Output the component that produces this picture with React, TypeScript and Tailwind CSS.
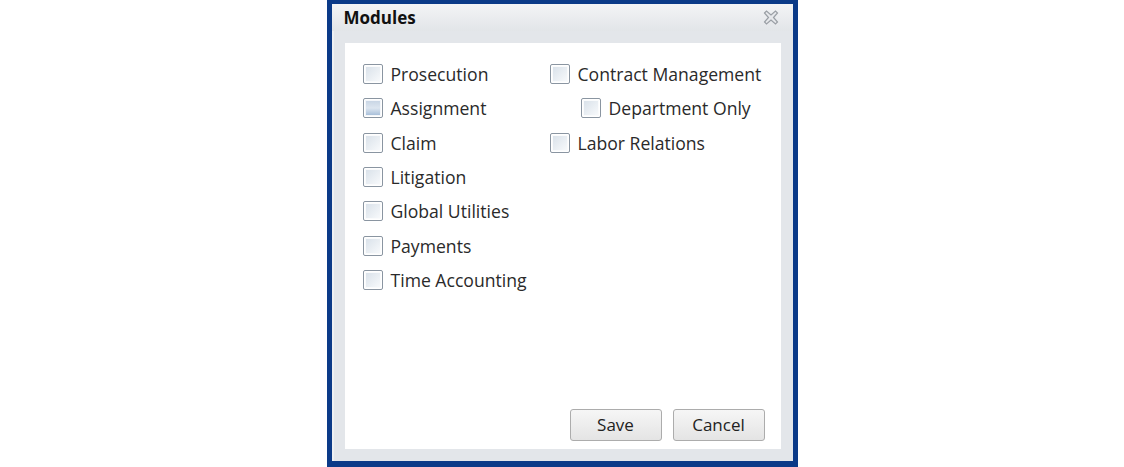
import React from "react";

type Item = { label: string; indent?: boolean; hover?: boolean };

const leftItems: Item[] = [
  { label: "Prosecution" },
  { label: "Assignment", hover: true },
  { label: "Claim" },
  { label: "Litigation" },
  { label: "Global Utilities" },
  { label: "Payments" },
  { label: "Time Accounting" },
];

const rightItems: Item[] = [
  { label: "Contract Management" },
  { label: "Department Only", indent: true },
  { label: "Labor Relations" },
];

const Box = ({ hover }: { hover?: boolean }) => (
  <span className="w-[20px] h-[20px] shrink-0 border border-[#8a95a1] rounded-[2px] p-px bg-white flex">
    <span
      className={
        hover
          ? "flex-1 border border-[#f3f6fa] bg-gradient-to-b from-[#c9d6e5] via-[#dde6f0] to-[#a9c0da]"
          : "flex-1 border border-[#fafbfc] bg-gradient-to-br from-[#dae2ea] to-[#f7f9fb]"
      }
    />
  </span>
);

const Row = ({ item }: { item: Item }) => (
  <label
    className={`h-[34.33px] flex items-center gap-[8px] ${item.indent ? "pl-[31px]" : ""}`}
  >
    <Box hover={item.hover} />
    <span className="text-[17.6px] text-[#2a2a2a] whitespace-nowrap">{item.label}</span>
  </label>
);

const CloseIcon = () => (
  <svg width="16" height="15" viewBox="0 0 16 15">
    <path
      d="M1.5 3 L3.5 1 L8 5 L12.5 1 L14.5 3 L10.5 7.5 L14.5 12 L12.5 14 L8 10 L3.5 14 L1.5 12 L5.5 7.5 Z"
      fill="#e6e8eb"
      stroke="#9a9fa5"
      strokeWidth="1.2"
    />
  </svg>
);

const Button = ({ children }: { children: React.ReactNode }) => (
  <button className="w-[92px] h-[32px] rounded-[3px] border border-[#acacac] bg-gradient-to-b from-[#f6f6f6] to-[#e4e4e4] text-[17px] text-[#222]">
    {children}
  </button>
);

export default function App() {
  return (
    <div
      className="w-full h-[467px] bg-white flex justify-center"
      style={{ fontFamily: '"Open Sans", "Noto Sans", sans-serif' }}
    >
      <div className="w-[471px] h-[467px] border-x-[5px] border-t-[4px] border-b-[6px] border-[#0b3a88] bg-[#e3e6ea] flex flex-col">
        <div className="h-[27px] shrink-0 pl-[12px] pr-[14px] flex items-center justify-between bg-gradient-to-b from-[#f3f4f6] to-[#e2e5e8]">
          <span className="text-[17px] font-bold text-[#111]">Modules</span>
          <CloseIcon />
        </div>
        <div className="flex-1 border-l-2 border-[#eef0f2] pl-[11px] pr-[12px] pt-[12px] pb-[12px] flex">
          <div className="flex-1 bg-white flex flex-col">
            <div className="flex pl-[18px] pt-[14px]">
              <div className="w-[187px] flex flex-col">
                {leftItems.map((it) => (
                  <Row key={it.label} item={it} />
                ))}
              </div>
              <div className="flex flex-col">
                {rightItems.map((it) => (
                  <Row key={it.label} item={it} />
                ))}
              </div>
            </div>
            <div className="mt-auto flex justify-end gap-[11px] pr-[16px] pb-[8px]">
              <Button>Save</Button>
              <Button>Cancel</Button>
            </div>
          </div>
        </div>
      </div>
    </div>
  );
}
